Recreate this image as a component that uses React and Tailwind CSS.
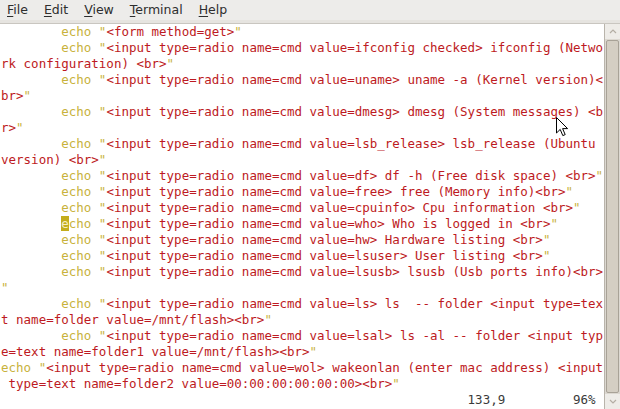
import React from "react";

const R = "text-[#bd1a22]";
const Y = "text-[#c8b23c]";

const I = "        ";
const pre = '<input type=radio name=cmd ';

function Echo({ indent = true, cursor = false }) {
  return (
    <>
      {indent ? I : ""}
      {cursor ? (
        <span className="bg-[#c4ad1c] text-[#f4eec4]">e</span>
      ) : (
        <span className={Y}>e</span>
      )}
      <span className={Y}>cho </span>
    </>
  );
}

const Q = () => <span className={Y}>"</span>;

const rows = [
  <>
    <Echo />
    <Q />
    <span className={R}>{"<form method=get>"}</span>
    <Q />
  </>,
  <>
    <Echo />
    <Q />
    <span className={R}>{pre + "value=ifconfig checked> ifconfig (Netwo"}</span>
  </>,
  <>
    <span className={R}>{"rk configuration) <br>"}</span>
    <Q />
  </>,
  <>
    <Echo />
    <Q />
    <span className={R}>{pre + "value=uname> uname -a (Kernel version)<"}</span>
  </>,
  <>
    <span className={R}>{"br>"}</span>
    <Q />
  </>,
  <>
    <Echo />
    <Q />
    <span className={R}>{pre + "value=dmesg> dmesg (System messages) <b"}</span>
  </>,
  <>
    <span className={R}>{"r>"}</span>
    <Q />
  </>,
  <>
    <Echo />
    <Q />
    <span className={R}>{pre + "value=lsb_release> lsb_release (Ubuntu "}</span>
  </>,
  <>
    <span className={R}>{"version) <br>"}</span>
    <Q />
  </>,
  <>
    <Echo />
    <Q />
    <span className={R}>{pre + "value=df> df -h (Free disk space) <br>"}</span>
    <Q />
  </>,
  <>
    <Echo />
    <Q />
    <span className={R}>{pre + "value=free> free (Memory info)<br>"}</span>
    <Q />
  </>,
  <>
    <Echo />
    <Q />
    <span className={R}>{pre + "value=cpuinfo> Cpu information <br>"}</span>
    <Q />
  </>,
  <>
    <Echo cursor />
    <Q />
    <span className={R}>{pre + "value=who> Who is logged in <br>"}</span>
    <Q />
  </>,
  <>
    <Echo />
    <Q />
    <span className={R}>{pre + "value=hw> Hardware listing <br>"}</span>
    <Q />
  </>,
  <>
    <Echo />
    <Q />
    <span className={R}>{pre + "value=lsuser> User listing <br>"}</span>
    <Q />
  </>,
  <>
    <Echo />
    <Q />
    <span className={R}>{pre + "value=lsusb> lsusb (Usb ports info)<br>"}</span>
  </>,
  <>
    <Q />
  </>,
  <>
    <Echo />
    <Q />
    <span className={R}>{pre + "value=ls> ls  -- folder <input type=tex"}</span>
  </>,
  <>
    <span className={R}>{"t name=folder value=/mnt/flash><br>"}</span>
    <Q />
  </>,
  <>
    <Echo />
    <Q />
    <span className={R}>{pre + "value=lsal> ls -al -- folder <input typ"}</span>
  </>,
  <>
    <span className={R}>{"e=text name=folder1 value=/mnt/flash><br>"}</span>
    <Q />
  </>,
  <>
    <Echo indent={false} />
    <Q />
    <span className={R}>{pre + "value=wol> wakeonlan (enter mac address) <input"}</span>
  </>,
  <>
    <span className={R}>{" type=text name=folder2 value=00:00:00:00:00:00><br>"}</span>
    <Q />
  </>,
  <>
    <span className="text-[#3a3a3a]">{" ".repeat(62) + "133,9" + " ".repeat(9) + "96%"}</span>
  </>,
];

function MenuItem({ first, rest }) {
  return (
    <span className="px-[8px]">
      <span className="underline underline-offset-2 decoration-1">{first}</span>
      {rest}
    </span>
  );
}

export default function App() {
  return (
    <div className="w-[620px] h-[409px] overflow-hidden bg-white flex flex-col relative">
      <div className="h-[24px] shrink-0 flex flex-col bg-[#edecea]">
        <div
          className="h-[20px] flex items-center -ml-[1px] text-[12.5px] text-[#2e2e2e]"
          style={{ fontFamily: '"DejaVu Sans", sans-serif' }}
        >
          <MenuItem first="F" rest="ile" />
          <MenuItem first="E" rest="dit" />
          <MenuItem first="V" rest="iew" />
          <MenuItem first="T" rest="erminal" />
          <MenuItem first="H" rest="elp" />
        </div>
        <div className="flex-1 bg-[#e6e4e0] border-b border-[#c9c6c0]" />
      </div>
      <div className="flex flex-1 min-h-0">
        <div
          className="flex-1 pl-[1px] text-[12.5px] leading-[16px] whitespace-pre overflow-hidden"
          style={{ fontFamily: '"DejaVu Sans Mono", monospace' }}
        >
          {rows.map((r, i) => (
            <div key={i} className="h-[16px]">
              {r}
            </div>
          ))}
        </div>
        <div className="w-[16px] shrink-0 bg-[#dcd8d1] border-l border-[#b9b4ab] flex flex-col">
          <div className="h-[15px] flex items-center justify-center bg-[#eeece8]">
            <svg width="8" height="5" viewBox="0 0 8 5">
              <path d="M1 4 L4 1 L7 4" fill="none" stroke="#b4aea4" strokeWidth="1.2" />
            </svg>
          </div>
          <div className="flex-1 mx-[1px] my-[1px] bg-[#d4cec3] border border-[#a8a297] rounded-[2px]" />
          <div className="h-[15px] flex items-center justify-center bg-[#eeece8]">
            <svg width="8" height="5" viewBox="0 0 8 5">
              <path d="M1 1 L4 4 L7 1" fill="none" stroke="#b4aea4" strokeWidth="1.2" />
            </svg>
          </div>
        </div>
      </div>
      <svg
        className="absolute left-[556px] top-[117px]"
        width="13"
        height="20"
        viewBox="0 0 13 20"
      >
        <path
          d="M0.5 0.5 L0.5 16 L4.2 12.4 L6.8 18.6 L9.2 17.6 L6.6 11.6 L11.6 11.6 Z"
          fill="white"
          stroke="black"
          strokeWidth="1"
          strokeLinejoin="round"
        />
      </svg>
    </div>
  );
}
